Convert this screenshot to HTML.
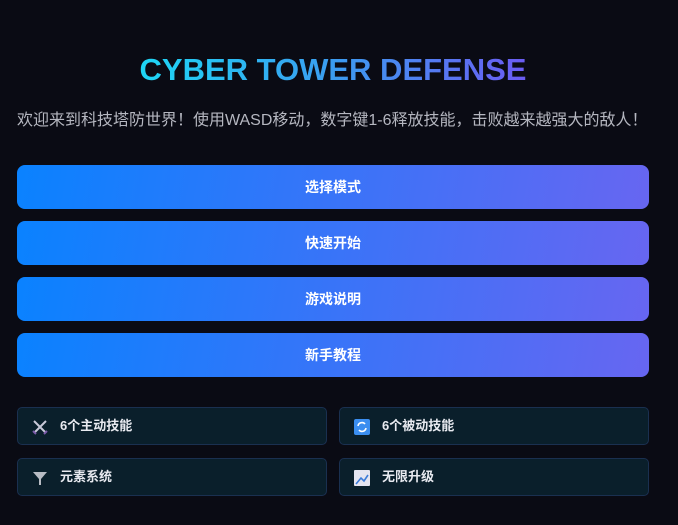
<!DOCTYPE html>
<html><head><meta charset="utf-8"><style>
*{margin:0;padding:0;box-sizing:border-box}
body{width:678px;height:525px;background:#0a0b14;font-family:"Liberation Sans","Noto Sans CJK SC",sans-serif;position:relative;overflow:hidden}
h1{position:absolute;top:51px;left:0;width:678px;text-align:center;font-size:31px;font-weight:bold;line-height:38px;margin-left:-6px}
h1 span{display:inline-block;background:linear-gradient(90deg,#1ed6f5,#3b9cf0 50%,#6b5cf2);-webkit-background-clip:text;background-clip:text;color:transparent}
.sub{position:absolute;top:111px;left:17px;font-size:16px;color:#b5b7c0;white-space:nowrap;line-height:20px}
.btn{position:absolute;left:17px;width:632px;height:44px;border-radius:8px;background:linear-gradient(100deg,#0a82ff,#6766f1);color:#fff;font-weight:bold;font-size:14px;text-align:center;line-height:44px}
.card{position:absolute;width:310px;height:38px;border:1px solid #1a3050;border-radius:5px;background:#0a1f2b;color:#e8eaf0;font-size:13px;font-weight:bold;line-height:36px;padding-left:42px}
.card svg{position:absolute;left:14px;top:11px}
</style></head><body>
<h1><span>CYBER TOWER DEFENSE</span></h1>
<div class="sub">欢迎来到科技塔防世界！使用WASD移动，数字键1-6释放技能，击败越来越强大的敌人！</div>
<div class="btn" style="top:165px">选择模式</div>
<div class="btn" style="top:221px">快速开始</div>
<div class="btn" style="top:277px">游戏说明</div>
<div class="btn" style="top:333px">新手教程</div>
<div class="card" style="left:17px;top:407px"><svg width="16" height="16" viewBox="0 0 16 16"><path d="M2 2L13 13M14 2L3 13" stroke="#c8c8d8" stroke-width="2"/><path d="M1 12l3 3M15 12l-3 3" stroke="#7a5aa8" stroke-width="2"/></svg>6个主动技能</div>
<div class="card" style="left:339px;top:407px"><svg width="16" height="16" viewBox="0 0 16 16"><rect width="16" height="16" rx="2" fill="#3b8ef0"/><path d="M4 7a4 4 0 0 1 7-2M12 9a4 4 0 0 1-7 2" stroke="#fff" stroke-width="1.6" fill="none"/></svg>6个被动技能</div>
<div class="card" style="left:17px;top:458px"><svg width="16" height="16" viewBox="0 0 16 16"><path d="M1 2h14L9 9v6H7V9z" fill="#b8bcc4"/></svg>元素系统</div>
<div class="card" style="left:339px;top:458px"><svg width="16" height="16" viewBox="0 0 16 16"><rect width="16" height="16" rx="1" fill="#e4e4f0"/><path d="M2 14L7 8l3 3 4-6" stroke="#3a7ad8" stroke-width="1.6" fill="none"/></svg>无限升级</div>
</body></html>
